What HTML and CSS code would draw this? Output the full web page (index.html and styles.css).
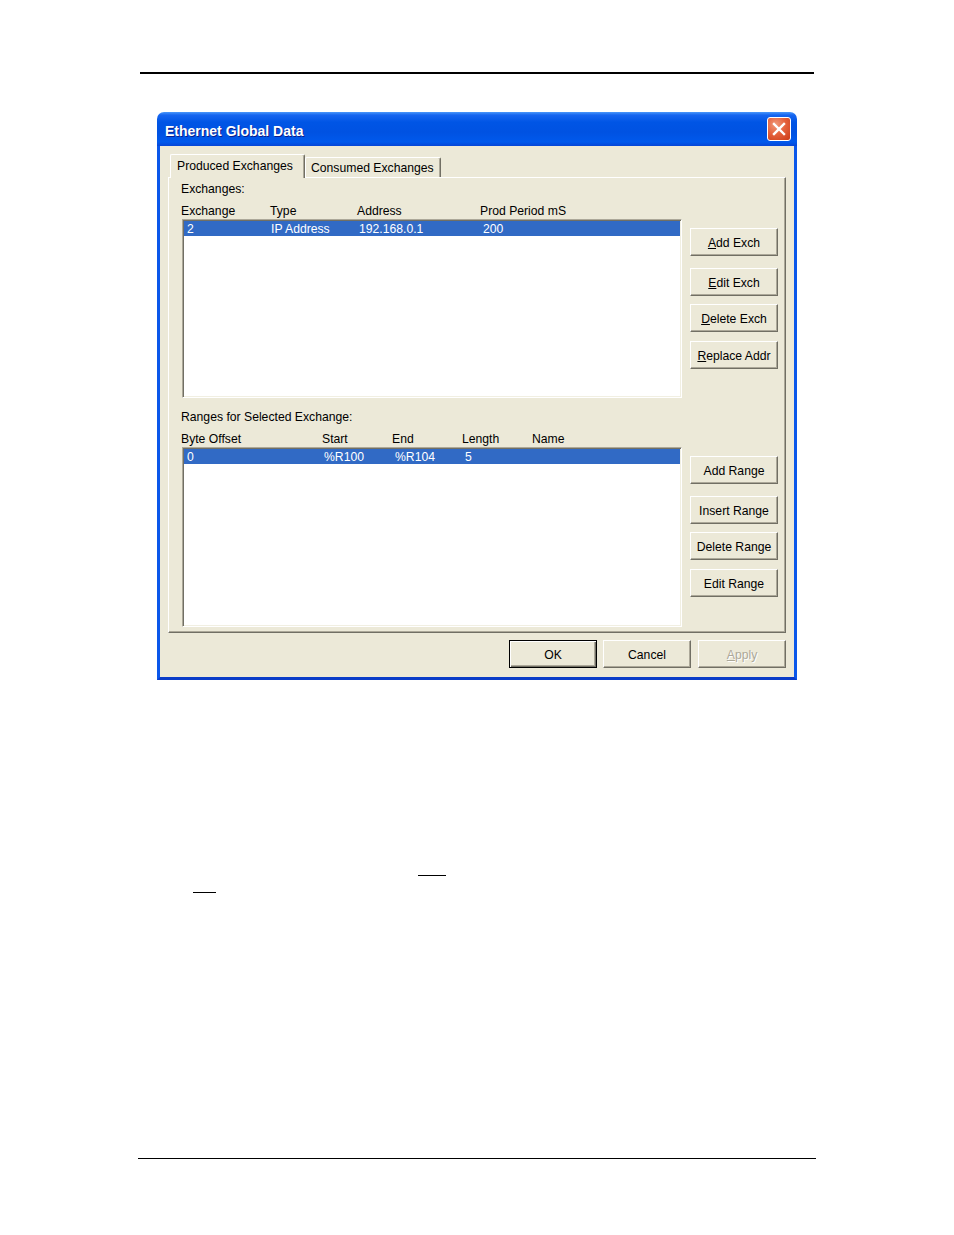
FILE: index.html
```html
<!DOCTYPE html>
<html>
<head>
<meta charset="utf-8">
<title>Ethernet Global Data</title>
<link rel="stylesheet" href="styles.css">
</head>
<body>
<div class="page">
  <div class="rule-top"></div>

  <div class="dialog">
    <div class="titlebar">
      <span class="title">Ethernet Global Data</span>
      <span class="close">
        <svg width="14" height="14" viewBox="0 0 14 14"><path d="M2 2 L12 12 M12 2 L2 12" stroke="#fff" stroke-width="2.4" stroke-linecap="square"/></svg>
      </span>
    </div>
    <div class="dlg-body">
      <div class="tabs">
        <div class="tab tab-active">Produced Exchanges</div>
        <div class="tab">Consumed Exchanges</div>
      </div>
      <div class="panel">
        <div class="section">
          <div class="left">
            <div class="label">Exchanges:</div>
            <div class="hdr hdr-ex">
              <span>Exchange</span><span>Type</span><span>Address</span><span>Prod Period mS</span>
            </div>
            <div class="listbox lb1">
              <div class="row row-ex sel">
                <span>2</span><span>IP Address</span><span>192.168.0.1</span><span>200</span>
              </div>
            </div>
          </div>
          <div class="btncol">
            <button class="btn first"><u>A</u>dd Exch</button>
            <button class="btn second"><u>E</u>dit Exch</button>
            <button class="btn third"><u>D</u>elete Exch</button>
            <button class="btn"><u>R</u>eplace Addr</button>
          </div>
        </div>
        <div class="section sec2">
          <div class="left">
            <div class="label">Ranges for Selected Exchange:</div>
            <div class="hdr hdr-rg">
              <span>Byte Offset</span><span>Start</span><span>End</span><span>Length</span><span>Name</span>
            </div>
            <div class="listbox lb2">
              <div class="row row-rg sel">
                <span>0</span><span>%R100</span><span>%R104</span><span>5</span>
              </div>
            </div>
          </div>
          <div class="btncol">
            <button class="btn first">Add Range</button>
            <button class="btn second">Insert Range</button>
            <button class="btn third">Delete Range</button>
            <button class="btn">Edit Range</button>
          </div>
        </div>
      </div>
      <div class="actions">
        <button class="btn btn-default">OK</button>
        <button class="btn btn-cancel">Cancel</button>
        <button class="btn btn-disabled"><u>A</u>pply</button>
      </div>
    </div>
  </div>

  <div class="blank blank1"></div>
  <div class="blank blank2"></div>

  <div class="rule-bottom"></div>
</div>
</body>
</html>
```

FILE: styles.css
```css
html, body {
  margin: 0;
  padding: 0;
  background: #ffffff;
}

.page {
  padding-top: 72px;
  font-family: "Liberation Sans", Arial, sans-serif;
  font-size: 12.2px;
  color: #000;
}

.rule-top {
  margin-left: 140px;
  width: 674px;
  height: 2px;
  background: #000;
}

.dialog {
  margin-top: 38px;
  margin-left: 157px;
  width: 640px;
}

.titlebar {
  height: 34px;
  border-radius: 7px 7px 0 0;
  background: linear-gradient(to bottom, #4A98FA 0%, #1665F0 9%, #0055E5 30%, #0052E2 60%, #0059EC 88%, #0646D6 100%);
  display: flex;
  align-items: center;
  justify-content: space-between;
  padding: 0 6px 0 8px;
  box-sizing: border-box;
}

.title {
  font-family: "Liberation Sans", Arial, sans-serif;
  font-weight: bold;
  font-size: 14px;
  color: #fff;
  text-shadow: 1px 1px 0 #0A1E8C;
  padding-top: 4px;
}

.close {
  width: 24px;
  height: 24px;
  box-sizing: border-box;
  border: 1px solid #fff;
  border-radius: 3px;
  background: radial-gradient(circle at 35% 30%, #F09A7A 0%, #E5633E 45%, #CC3A16 100%);
  display: flex;
  align-items: center;
  justify-content: center;
}

.dlg-body {
  background: #ECE9D8;
  border: 3px solid #0A57EA;
  border-top: 0;
  border-bottom-color: #0A3CC8;
  padding: 8px 8px 9px 8px;
}

.tabs {
  display: flex;
  height: 23px;
  padding-left: 2px;
  position: relative;
  z-index: 1;
}

.tab {
  box-sizing: border-box;
  height: 20px;
  margin-top: 3px;
  width: 136px;
  border-top: 1px solid #fff;
  border-left: 1px solid #fff;
  border-right: 1px solid #716F64;
  box-shadow: inset -1px 0 0 #ACA899;
  border-radius: 2px 2px 0 0;
  background: #ECE9D8;
  padding-left: 5px;
  line-height: 21px;
  white-space: nowrap;
}

.tab-active {
  height: 24px;
  margin-top: 0;
  width: 135px;
  padding-left: 6px;
  line-height: 22px;
}

.panel {
  box-sizing: border-box;
  height: 456px;
  border: 1px solid;
  border-color: #fff #716F64 #716F64 #fff;
  box-shadow: inset -1px -1px 0 #ACA899;
  padding: 3px 0 0 12px;
}

.section {
  display: grid;
  grid-template-columns: 501px 88px;
  column-gap: 8px;
}

.sec2 {
  margin-top: 11px;
}

.label {
  line-height: 15px;
  height: 14px;
  padding-top: 1px;
}

.hdr {
  margin-top: 7px;
  line-height: 15px;
  height: 14px;
  padding-top: 1px;
  display: grid;
  white-space: nowrap;
}

.hdr-ex {
  grid-template-columns: 89px 87px 123px auto;
}

.hdr-rg {
  grid-template-columns: 141px 70px 70px 70px auto;
}

.listbox {
  box-sizing: border-box;
  margin-top: 1px;
  margin-left: 1px;
  width: 500px;
  background: #fff;
  border: 1px solid;
  border-color: #ACA899 #fff #fff #ACA899;
  box-shadow: inset 1px 1px 0 #716F64, inset -1px -1px 0 #F1EFE2;
  padding: 1px 1px;
}

.lb1 {
  height: 179px;
}

.lb2 {
  height: 180px;
}

.row {
  display: grid;
  height: 14px;
  padding-top: 1px;
  line-height: 15px;
  padding-left: 3px;
  white-space: nowrap;
}

.row-ex {
  grid-template-columns: 84px 88px 124px auto;
}

.row-rg {
  grid-template-columns: 137px 71px 70px auto;
}

.sel {
  background: #316AC5;
  color: #fff;
}

.btncol {
  display: flex;
  flex-direction: column;
  padding-top: 47px;
}

.btn {
  box-sizing: border-box;
  width: 88px;
  height: 28px;
  margin: 0 0 9px 0;
  padding: 2px 0 0 0;
  font-family: "Liberation Sans", Arial, sans-serif;
  font-size: 12.2px;
  color: #000;
  background: #ECE9D8;
  border: 1px solid;
  border-color: #fff #716F64 #716F64 #fff;
  box-shadow: inset -1px -1px 0 #ACA899;
  border-radius: 0;
  text-align: center;
  white-space: nowrap;
}

.btn.first {
  margin-bottom: 12px;
}

.btn.second {
  margin-bottom: 8px;
}

.btn.third {
  margin-bottom: 9px;
}

.actions {
  display: flex;
  justify-content: flex-end;
  margin-top: 7px;
}

.actions .btn {
  margin: 0;
}

.actions .btn-default {
  border: 1px solid #000;
  box-shadow: inset 1px 1px 0 #fff, inset -1px -1px 0 #716F64, inset -2px -2px 0 #ACA899;
  margin-right: 6px;
}

.actions .btn-cancel {
  margin-right: 7px;
}

.btn-disabled {
  color: #ACA899;
  text-shadow: 1px 1px 0 #fff;
}

.blank {
  height: 1px;
  background: #000;
}

.blank1 {
  margin-top: 195px;
  margin-left: 418px;
  width: 28px;
}

.blank2 {
  margin-top: 16px;
  margin-left: 193px;
  width: 23px;
}

.rule-bottom {
  margin-top: 265px;
  margin-left: 138px;
  width: 678px;
  height: 1px;
  background: #000;
}
```
